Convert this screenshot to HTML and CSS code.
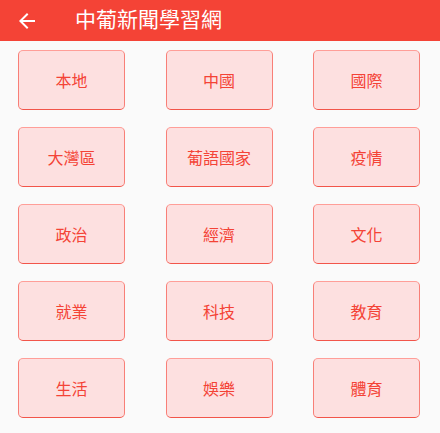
FILE: index.html
```html
<!DOCTYPE html>
<html lang="zh-Hant">
<head>
<meta charset="utf-8">
<link rel="stylesheet" href="styles.css">
</head>
<body>
<header class="appbar">
  <svg class="back" width="24" height="24" viewBox="0 0 24 24"><path d="M20 11H7.83l5.59-5.59L12 4l-8 8 8 8 1.41-1.41L7.83 13H20v-2z" fill="#fff"/></svg>
  <h1 class="title">中葡新聞學習網</h1>
</header>
<main class="grid">
  <button class="btn">本地</button>
  <button class="btn">中國</button>
  <button class="btn">國際</button>
  <button class="btn">大灣區</button>
  <button class="btn">葡語國家</button>
  <button class="btn">疫情</button>
  <button class="btn">政治</button>
  <button class="btn">經濟</button>
  <button class="btn">文化</button>
  <button class="btn">就業</button>
  <button class="btn">科技</button>
  <button class="btn">教育</button>
  <button class="btn">生活</button>
  <button class="btn">娛樂</button>
  <button class="btn">體育</button>
</main>
</body>
</html>
```
FILE: styles.css
```css
html, body {
  margin: 0;
  padding: 0;
}
body {
  background: #fafafa;
  font-family: Roboto, "Noto Sans CJK TC", "Noto Sans", sans-serif;
  width: 440px;
  height: 433px;
  overflow: hidden;
}
.appbar {
  height: 41px;
  background: #f44336;
  display: flex;
  align-items: center;
  padding-left: 15px;
  box-sizing: border-box;
}
.back {
  display: block;
  flex: none;
}
.title {
  margin: 0 0 0 36px;
  color: #fff;
  font-size: 21px;
  font-weight: 400;
  line-height: 1;
}
.grid {
  display: grid;
  grid-template-columns: repeat(3, 107px);
  column-gap: 40.5px;
  row-gap: 17px;
  padding: 9px 0 0 18px;
}
.btn {
  width: 107px;
  height: 60px;
  box-sizing: border-box;
  background: #fde0e0;
  border: 1.5px solid #f2554a;
  border-top-color: #ff9e98;
  border-left-color: #f87f77;
  border-right-color: #f87f77;
  border-radius: 5px;
  color: #f44336;
  font-family: Roboto, "Noto Sans CJK TC", sans-serif;
  font-size: 16px;
  padding: 0;
}
```
